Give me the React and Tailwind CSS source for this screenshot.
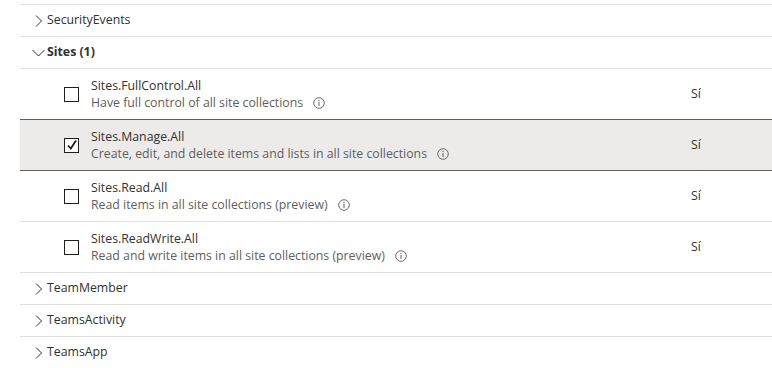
import React from "react";

const perms = [
  { name: "Sites.FullControl.All", desc: "Have full control of all site collections", checked: false },
  { name: "Sites.Manage.All", desc: "Create, edit, and delete items and lists in all site collections", checked: true },
  { name: "Sites.Read.All", desc: "Read items in all site collections (preview)", checked: false },
  { name: "Sites.ReadWrite.All", desc: "Read and write items in all site collections (preview)", checked: false },
];

function Chevron({ down }) {
  if (down) {
    return (
      <svg width="13" height="8" viewBox="0 0 13 8" className="mr-[2px]">
        <path d="M0.5 1 L6.5 7 L12.5 1" fill="none" stroke="#323130" strokeWidth="1" />
      </svg>
    );
  }
  return (
    <svg width="7" height="12" viewBox="0 0 7 12" className="mr-[5px]">
      <path d="M1 0.5 L6.5 6 L1 11.5" fill="none" stroke="#323130" strokeWidth="1" />
    </svg>
  );
}

function Info() {
  return (
    <svg width="12" height="12" viewBox="0 0 12 12" className="ml-[10px] inline-block">
      <circle cx="6" cy="6" r="5.3" fill="none" stroke="#605e5c" strokeWidth="0.9" />
      <line x1="6" y1="5" x2="6" y2="9" stroke="#605e5c" strokeWidth="1" />
      <circle cx="6" cy="3.4" r="0.6" fill="#605e5c" />
    </svg>
  );
}

function Group({ label }) {
  return (
    <div className="h-[32px] flex items-center pl-[15px] border-b border-[#e1dfdd]">
      <Chevron />
      <span>{label}</span>
    </div>
  );
}

function Checkbox({ checked }) {
  return (
    <div className="w-[15px] h-[15px] border-[1.5px] border-[#201f1e] bg-white flex items-center justify-center">
      {checked && (
        <svg width="12" height="12" viewBox="0 0 12 12">
          <path d="M2 6.5 L4.8 9.5 L10 1.5" fill="none" stroke="#201f1e" strokeWidth="1.8" />
        </svg>
      )}
    </div>
  );
}

export default function App() {
  return (
    <div className="w-[772px] h-[368px] bg-white overflow-hidden text-[12.3px] text-[#323130] font-['Segoe_UI','Open_Sans',sans-serif]">
      <div className="ml-[20px]">
        <div className="h-[5px] border-b border-[#e1dfdd]"></div>
        <Group label="SecurityEvents" />
        <div className="h-[32px] flex items-center pl-[12px] border-b border-[#e1dfdd] font-bold">
          <Chevron down />
          <span>Sites (1)</span>
        </div>
        {perms.map((p) => (
          <div
            key={p.name}
            className={
              p.checked
                ? "h-[52px] flex items-center bg-[#edebe9] border-y border-[#605e5c] -mt-px"
                : "h-[51px] flex items-center border-b border-[#e1dfdd]"
            }
          >
            <div className="w-[71px] pl-[44px] flex">
              <Checkbox checked={p.checked} />
            </div>
            <div className="flex-1 flex flex-col leading-[17px]">
              <span>{p.name}</span>
              <span className="text-[#605e5c] flex items-center">
                {p.desc}
                <Info />
              </span>
            </div>
            <div className="w-[81px]">Sí</div>
          </div>
        ))}
        <Group label="TeamMember" />
        <Group label="TeamsActivity" />
        <Group label="TeamsApp" />
      </div>
    </div>
  );
}
